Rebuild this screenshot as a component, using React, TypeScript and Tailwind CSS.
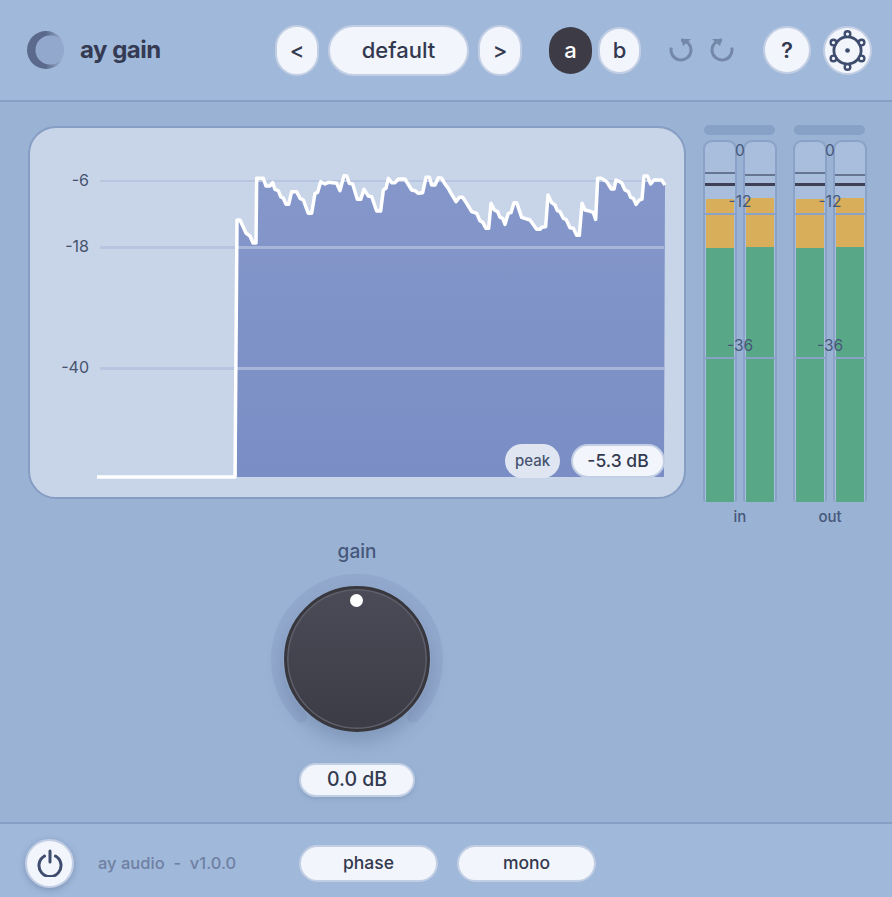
const font = { fontFamily: "Inter, 'Noto Sans', sans-serif" };

// waveform traced from the plot, in page coordinates
const traceA = [[110,55],[130,55],[138,78],[150,78],[158,68],[165,88],[175,92],[182,110],[190,115],[198,133],[206,133],[215,95],[230,95],[240,115],[250,120],[265,160],[275,160],[285,100],[293,97],[302,65],[315,72],[325,67],[350,70],[360,92],[372,47],[380,48],[388,70],[398,72],[412,118],[422,118],[432,88],[445,108],[455,110],[470,153],[482,153],[490,90],[498,85],[505,55],[515,68],[525,68],[535,57],[555,57],[575,90],[585,92],[595,100],[608,98],[618,52],[628,52],[635,75],[645,75],[655,53],[665,55],[675,72],[685,85]];
const traceB = [[0,95],[18,125],[28,112],[38,112],[50,130],[65,155],[80,160],[90,182],[98,187],[108,205],[116,205],[123,130],[133,150],[143,155],[150,172],[158,175],[165,193],[175,160],[183,158],[192,128],[200,128],[215,172],[240,180],[260,208],[270,208],[275,202],[287,200],[294,105],[305,128],[315,135],[322,152],[330,155],[340,175],[348,178],[360,203],[370,205],[380,226],[388,226],[396,130],[405,150],[418,153],[430,158],[437,178],[443,55],[455,55],[470,65],[484,87],[492,87],[498,60],[515,68],[525,90],[535,95],[542,112],[550,115],[558,133],[568,120],[576,117],[582,48],[592,48],[602,72],[612,60],[635,60],[645,75]];

const points: number[][] = [
  [237, 220],
  [240, 220],
  [246, 233],
  [250, 236],
  [253, 243],
  [256, 243],
  ...traceA.map(([x, y]) => [220 + x / 3, 160 + y / 3]),
  ...traceB.map(([x, y]) => [450 + x / 3, 160 + y / 3]),
];
const line = points.map((p) => p.join(",")).join(" ");

function Pill({ children, className }: { children: React.ReactNode; className: string }) {
  return (
    <div className={`flex items-center justify-center rounded-full border-2 border-[#c2cee4] bg-[#f2f5fb] text-[#33394f] ${className}`}>
      {children}
    </div>
  );
}

function Plot() {
  return (
    <div className="relative h-[373px] w-[658px] overflow-hidden rounded-[28px] border-2 border-[#869dc4] bg-[#c8d4e8]">
      {/* svg origin is page coords shifted by the panel */}
      <svg width="654" height="369" viewBox="30 128 654 369" className="absolute left-0 top-0">
        <defs>
          <linearGradient id="fill" x1="0" y1="0" x2="0" y2="1">
            <stop offset="0" stopColor="#8597ca" />
            <stop offset="1" stopColor="#7a8ec5" />
          </linearGradient>
        </defs>
        <polygon points={`237,477 ${line} 664,477`} fill="url(#fill)" />
        <rect x="100" y="180" width="564" height="2" fill="#b8c5e1" />
        <rect x="100" y="246" width="137" height="3" fill="#b8c5e1" />
        <rect x="237" y="246" width="427" height="3" fill="#a6b5d8" />
        <rect x="100" y="367" width="137" height="3" fill="#b8c5e1" />
        <rect x="237" y="367" width="427" height="3" fill="#a6b5d8" />
        <polyline
          points={`97,477 235,477 ${line}`}
          fill="none"
          stroke="#fff"
          strokeWidth="3.5"
          strokeLinejoin="round"
        />
        <g fontSize="16" fill="#46536f" textAnchor="end" style={font}>
          <text x="89" y="186">-6</text>
          <text x="89" y="252">-18</text>
          <text x="89" y="373">-40</text>
        </g>
      </svg>
      <div className="absolute bottom-[19px] left-[475px] flex items-center gap-[11px]">
        <div className="flex h-[34px] w-[55px] items-center justify-center rounded-full bg-[#dfe5f1] text-[15px] font-medium text-[#46536f]">
          peak
        </div>
        <Pill className="h-[34px] w-[94px] text-[17.5px] font-medium">-5.3 dB</Pill>
      </div>
    </div>
  );
}

function Bar({ fillTop, peakTop }: { fillTop: string; peakTop: string }) {
  return (
    <div className="relative h-[362px] w-[34px] overflow-hidden rounded-t-[9px] rounded-b-[3px] border-2 border-b-0 border-[#8aa2c7] bg-[#a9bddc]">
      <div className={`absolute left-0 right-0 h-[2px] bg-[#667592] ${peakTop}`} />
      <div className="absolute left-0 right-0 top-[41px] h-[3px] bg-[#3f4256]" />
      <div className={`absolute bottom-0 left-[1px] right-[1px] flex flex-col ${fillTop}`}>
        <div className="h-[49px] shrink-0 bg-[#d8ae5b]" />
        <div className="flex-1 bg-[#58a888]" />
      </div>
      <div className="absolute left-0 right-0 top-[71px] h-[2px] bg-[#8aa2c7]" />
      <div className="absolute left-0 right-0 top-[215px] h-[2px] bg-[#8aa2c7]" />
    </div>
  );
}

function Meter({ label }: { label: string }) {
  return (
    <div className="flex w-[74px] flex-col items-center">
      <div className="mb-[5px] ml-[1px] h-[10px] w-[71px] self-start rounded-full bg-[#87a0c5]" />
      <div className="relative flex w-[74px] gap-[6px]">
        <Bar fillTop="top-[57px]" peakTop="top-[30px]" />
        <Bar fillTop="top-[56px]" peakTop="top-[32px]" />
        <span className="absolute left-0 right-0 top-[2px] text-center text-[15.5px] leading-[18px] text-[#46577a]">0</span>
        <span className="absolute left-0 right-0 top-[53px] text-center text-[15.5px] leading-[18px] text-[#46577a]">-12</span>
        <span className="absolute left-0 right-0 top-[197px] text-center text-[15.5px] leading-[18px] text-[#46577a]">-36</span>
      </div>
      <span className="mt-[6px] text-[15px] font-medium leading-[18px] text-[#46577a]">{label}</span>
    </div>
  );
}

function Knob() {
  return (
    <div className="relative mt-[9px] h-[172px] w-[172px]">
      <svg width="172" height="172" viewBox="0 0 172 172" className="absolute inset-0">
        <path d="M 30 144 A 80 80 0 1 1 142 144" fill="none" stroke="#92a9cd" strokeWidth="12" strokeLinecap="round" />
      </svg>
      <div className="absolute left-[13px] top-[13px] h-[146px] w-[146px] rounded-full border-[3px] border-[#38373e] bg-gradient-to-b from-[#4b4b58] to-[#3c3c46] shadow-[0_10px_18px_rgba(60,80,120,0.28),inset_0_0_0_1.5px_#5f5f6b]">
        <div className="absolute left-[63px] top-[5px] h-[13px] w-[13px] rounded-full bg-white" />
      </div>
    </div>
  );
}

function UndoIcon({ flip }: { flip?: boolean }) {
  return (
    <svg width="24" height="24" viewBox="0 0 24 24" className={flip ? "-scale-x-100" : ""}>
      <path d="M 12 2 A 10 10 0 1 1 2.3 9.5" fill="none" stroke="#7488a9" strokeWidth="3" />
      <polygon points="12,1 22,1 14,8" fill="#7488a9" />
    </svg>
  );
}

function SettingsIcon() {
  const nodes = [[24, 7], [39, 16], [39, 33], [24, 42], [9, 33], [9, 16]];
  return (
    <svg width="48" height="49" viewBox="0 0 48 49">
      <circle cx="24" cy="24.5" r="14.5" fill="none" stroke="#3e4c6e" strokeWidth="3" />
      <circle cx="24" cy="24.5" r="2.5" fill="#3e4c6e" />
      {nodes.map(([x, y], i) => (
        <circle key={i} cx={x} cy={y} r="3" fill="#f2f5fb" stroke="#3e4c6e" strokeWidth="2.5" />
      ))}
    </svg>
  );
}

export default function App() {
  return (
    <div className="flex h-[897px] w-[892px] flex-col overflow-hidden bg-[#9ab3d4]" style={font}>
      {/* header */}
      <div className="flex h-[102px] shrink-0 items-center border-b-2 border-[#85a0c4] bg-[#a0b8da] pl-[27px]">
        <svg width="38" height="38" viewBox="0 0 38 38">
          <defs>
            <linearGradient id="moon" x1="0" y1="0" x2="1" y2="0">
              <stop offset="0.5" stopColor="#5b6a8c" />
              <stop offset="1" stopColor="#a9bcdb" />
            </linearGradient>
          </defs>
          <circle cx="23" cy="19" r="14.5" fill="#93a8cd" />
          <path
            fillRule="evenodd"
            d="M 19 0 A 19 19 0 1 0 19 38 A 19 19 0 1 0 19 0 Z M 23 4.5 A 14.5 14.5 0 1 1 23 33.5 A 14.5 14.5 0 1 1 23 4.5 Z"
            fill="url(#moon)"
          />
        </svg>
        <span className="ml-[15px] w-[195px] text-[24px] font-bold tracking-[-0.5px] text-[#333a52]">ay gain</span>
        <Pill className="h-[51px] w-[44px] text-[22px] font-medium">&lt;</Pill>
        <Pill className="ml-[9px] h-[51px] w-[141px] text-[22px] font-medium">default</Pill>
        <Pill className="ml-[9px] h-[51px] w-[44px] text-[22px] font-medium">&gt;</Pill>
        <div className="ml-[27px] flex h-[47px] w-[43px] items-center justify-center rounded-full bg-[#3d3c46] text-[22px] font-medium text-white">a</div>
        <Pill className="ml-[6px] h-[47px] w-[43px] text-[22px] font-medium">b</Pill>
        <div className="ml-[28px] flex gap-[17px]">
          <UndoIcon />
          <UndoIcon flip />
        </div>
        <Pill className="ml-[29px] h-[48px] w-[48px] text-[22px] font-semibold">?</Pill>
        <div className="ml-[12px] flex h-[49px] w-[49px] items-center justify-center rounded-full border-2 border-[#c2cee4] bg-[#f2f5fb]">
          <SettingsIcon />
        </div>
      </div>

      {/* main */}
      <div className="flex flex-1 pl-[28px] pt-[24px]">
        <div className="flex w-[658px] flex-col items-center">
          <Plot />
          <span className="mt-[41px] text-[19px] font-medium leading-[24px] text-[#46577a]">gain</span>
          <Knob />
          <Pill className="mt-[18px] h-[34px] w-[116px] text-[19.5px] font-medium shadow-[0_2px_4px_rgba(90,110,150,0.25)]">0.0 dB</Pill>
        </div>
        <div className="ml-[17px] -mt-[1px] flex gap-[16px]">
          <Meter label="in" />
          <Meter label="out" />
        </div>
      </div>

      {/* footer */}
      <div className="flex h-[75px] shrink-0 items-center border-t-2 border-[#85a0c4] bg-[#a0b8da] pl-[25px] pt-[5px]">
        <Pill className="h-[49px] w-[49px] shadow-[0_2px_6px_rgba(70,90,130,0.35)]">
          <svg width="26" height="28" viewBox="0 0 26 28" fill="none" stroke="#3e4c6e" strokeWidth="3" strokeLinecap="round">
            <path d="M 7.5 7 A 11 11 0 1 0 18.5 7" />
            <path d="M 13 2 V 13" />
          </svg>
        </Pill>
        <span className="ml-[24px] w-[201px] text-[16.5px] font-medium text-[#6f80a3]">ay audio&nbsp; -&nbsp; v1.0.0</span>
        <Pill className="h-[37px] w-[139px] text-[17.5px] font-medium">phase</Pill>
        <Pill className="ml-[19px] h-[37px] w-[139px] text-[17.5px] font-medium">mono</Pill>
      </div>
    </div>
  );
}
